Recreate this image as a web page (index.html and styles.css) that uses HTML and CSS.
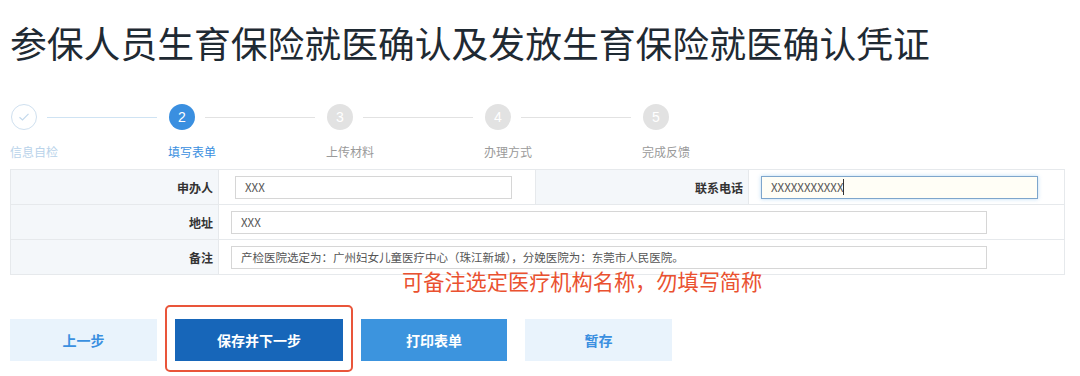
FILE: index.html
```html
<!DOCTYPE html>
<html lang="zh-CN">
  <head>
    <meta charset="UTF-8" />
    <title>参保人员生育保险就医确认</title>
    <link rel="stylesheet" href="styles.css">
  </head>
  <body>
    <h1 class="title">参保人员生育保险就医确认及发放生育保险就医确认凭证</h1>

    <div class="steps">
      <div class="step done">
        <div class="step-head">
          <span class="dot">
            <svg width="12" height="10" viewBox="0 0 12 10"><path d="M1.5 5.2 L4.5 8 L10.5 1.8" fill="none" stroke="#c3d9ec" stroke-width="1.2"/></svg>
          </span>
          <span class="line"></span>
        </div>
        <div class="step-label">信息自检</div>
      </div>
      <div class="step active">
        <div class="step-head">
          <span class="dot">2</span>
          <span class="line"></span>
        </div>
        <div class="step-label">填写表单</div>
      </div>
      <div class="step">
        <div class="step-head">
          <span class="dot">3</span>
          <span class="line"></span>
        </div>
        <div class="step-label">上传材料</div>
      </div>
      <div class="step">
        <div class="step-head">
          <span class="dot">4</span>
          <span class="line"></span>
        </div>
        <div class="step-label">办理方式</div>
      </div>
      <div class="step last">
        <div class="step-head">
          <span class="dot">5</span>
        </div>
        <div class="step-label">完成反馈</div>
      </div>
    </div>

    <div class="form-table">
      <div class="cell label">申办人</div>
      <div class="cell value first">
        <div class="input short">XXX</div>
      </div>
      <div class="cell label">联系电话</div>
      <div class="cell value">
        <div class="input short focus">XXXXXXXXXXX<span class="caret"></span></div>
      </div>

      <div class="cell label">地址</div>
      <div class="cell value wide">
        <div class="input long">XXX</div>
      </div>

      <div class="cell label">备注</div>
      <div class="cell value wide">
        <div class="input long">产检医院选定为：广州妇女儿童医疗中心（珠江新城），分娩医院为：东莞市人民医院。</div>
      </div>
    </div>

    <div class="hint">可备注选定医疗机构名称，勿填写简称</div>

    <div class="actions">
      <div class="btn light">上一步</div>
      <div class="btn primary marked">保存并下一步</div>
      <div class="btn blue">打印表单</div>
      <div class="btn light">暂存</div>
    </div>
  </body>
</html>
```

FILE: styles.css
```css
body {
  margin: 0;
  padding: 0 10px 14px;
  background: #fff;
  font-family: "Noto Sans CJK SC", "Noto Sans", sans-serif;
  color: #333;
}

.title {
  margin: 22px 0 0;
  font-size: 36.8px;
  line-height: 40px;
  font-weight: 400;
  color: #1f2a33;
}

/* steps */
.steps {
  display: flex;
  margin-top: 42px;
}

.step {
  width: 158px;
}

.step-head {
  display: flex;
  align-items: center;
  height: 26px;
}

.dot {
  box-sizing: border-box;
  width: 26px;
  height: 26px;
  margin-left: 1px;
  border-radius: 50%;
  background: #e2e2e2;
  color: #fff;
  font-family: "Liberation Sans", sans-serif;
  font-size: 14px;
  display: flex;
  align-items: center;
  justify-content: center;
  flex-shrink: 0;
}

.line {
  height: 1px;
  background: #e2e2e2;
  width: 110px;
  margin-left: 10px;
}

.step-label {
  margin-top: 14px;
  font-size: 12px;
  line-height: 16px;
  color: #9a9a9a;
}

.step.done .dot {
  background: #fff;
  border: 1.5px solid #cfe0ef;
}

.step.done .line {
  background: #cfe3f3;
}

.step.done .step-label {
  color: #b9d3ea;
}

.step.active .dot {
  background: #3a8fe0;
}

.step.active .step-label {
  color: #3a8fe0;
}

/* form table */
.form-table {
  display: grid;
  grid-template-columns: 208px 317px 213px 316px;
  width: 1054px;
  margin-top: 9px;
  border-top: 1px solid #e6e9ec;
  border-left: 1px solid #e6e9ec;
}

.cell {
  box-sizing: border-box;
  height: 35px;
  border-right: 1px solid #e6e9ec;
  border-bottom: 1px solid #e6e9ec;
  display: flex;
  align-items: center;
}

.cell.label {
  justify-content: flex-end;
  padding-right: 5px;
  background: #f4f7fa;
  font-size: 12px;
  font-weight: 700;
  color: #333;
}

.cell.value {
  padding-left: 12px;
}

.cell.value.first {
  padding-left: 16px;
}

.cell.value.wide {
  grid-column: span 3;
}

.input {
  box-sizing: border-box;
  height: 23px;
  border: 1px solid #d6d6d6;
  padding-left: 9px;
  font-size: 11.5px;
  color: #555;
  display: flex;
  align-items: center;
  white-space: nowrap;
}

.input.short {
  width: 277px;
}

.input.long {
  width: 756px;
}

.input.focus {
  border-color: #7ea6cc;
  background: #fffef6;
  box-shadow: 0 0 4px rgba(102, 175, 233, 0.45);
}

.caret {
  display: inline-block;
  width: 1px;
  height: 16px;
  background: #333;
}

/* hint */
.hint {
  margin: -6px 0 0 392px;
  font-size: 21.2px;
  line-height: 24px;
  color: #ea5130;
}

/* buttons */
.actions {
  display: flex;
  gap: 18px;
  margin-top: 26px;
}

.btn {
  width: 147px;
  height: 42px;
  display: flex;
  align-items: center;
  justify-content: center;
  font-size: 14px;
  font-weight: 700;
}

.btn.light {
  background: #e9f3fc;
  color: #3a8fe0;
}

.btn.primary {
  width: 168px;
  background: #1766b9;
  color: #fff;
}

.btn.blue {
  width: 146px;
  background: #3c94de;
  color: #fff;
}

.btn.marked {
  position: relative;
}

.btn.marked::after {
  content: "";
  position: absolute;
  left: -10px;
  right: -10px;
  top: -14px;
  bottom: -11px;
  border: 2px solid #e9553a;
  border-radius: 5px;
}
```
